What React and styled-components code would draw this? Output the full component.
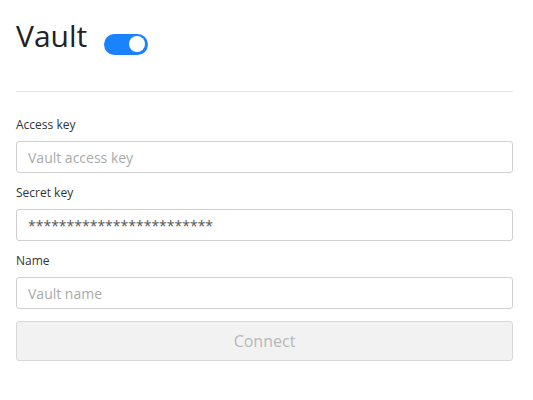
import React from "react";
import styled, { createGlobalStyle } from "styled-components";

const Global = createGlobalStyle`
  html, body { margin: 0; padding: 0; background: #fff; }
  body { font-family: "Open Sans", "Noto Sans", sans-serif; color: #333; }
  * { box-sizing: border-box; }
`;

const Page = styled.div`
  width: 533px;
  padding: 0 20px 0 16px;
`;

const Header = styled.div`
  display: flex;
  align-items: center;
  gap: 17px;
  height: 92px;
  padding-bottom: 14px;
  border-bottom: 1px solid #e3e3e3;
`;

const Title = styled.h1`
  margin: 0 0 5px;
  font-size: 30px;
  font-weight: 400;
  line-height: 40px;
  color: #222;
`;

const Toggle = styled.div`
  position: relative;
  width: 44px;
  height: 21px;
  border-radius: 11px;
  background: ${(p) => (p.$on ? "#1a82fb" : "#ccc")};
  margin-top: 11px;
`;

const Knob = styled.div`
  position: absolute;
  top: 2.5px;
  right: ${(p) => (p.$on ? "3px" : "auto")};
  left: ${(p) => (p.$on ? "auto" : "3px")};
  width: 16px;
  height: 16px;
  border-radius: 50%;
  background: #fff;
`;

const Form = styled.div`
  display: flex;
  flex-direction: column;
  padding-top: 24px;
`;

const Field = styled.div`
  display: flex;
  flex-direction: column;
  margin-bottom: 11px;
`;

const Label = styled.label`
  font-size: 12px;
  line-height: 18px;
  color: #333;
  margin-bottom: 7px;
`;

const Input = styled.input`
  height: 32px;
  width: 100%;
  border: 1px solid #d0d0d0;
  border-radius: 3px;
  padding: 0 11px;
  font-family: "Open Sans", "Noto Sans", sans-serif;
  font-size: 14px;
  color: #555;
  outline: none;
  &::placeholder { color: #aaa; }
`;

const Button = styled.button`
  margin-top: 1px;
  height: 40px;
  width: 100%;
  border: 1px solid #d8d8d8;
  border-radius: 3px;
  background: #f2f2f2;
  font-family: "Open Sans", "Noto Sans", sans-serif;
  font-size: 16px;
  color: #b8b8b8;
`;

export default function App() {
  return (
    <Page>
      <Global />
      <Header>
        <Title>Vault</Title>
        <Toggle $on>
          <Knob $on />
        </Toggle>
      </Header>
      <Form>
        <Field>
          <Label>Access key</Label>
          <Input placeholder="Vault access key" />
        </Field>
        <Field>
          <Label>Secret key</Label>
          <Input type="text" defaultValue="************************" />
        </Field>
        <Field>
          <Label>Name</Label>
          <Input placeholder="Vault name" />
        </Field>
        <Button disabled>Connect</Button>
      </Form>
    </Page>
  );
}
